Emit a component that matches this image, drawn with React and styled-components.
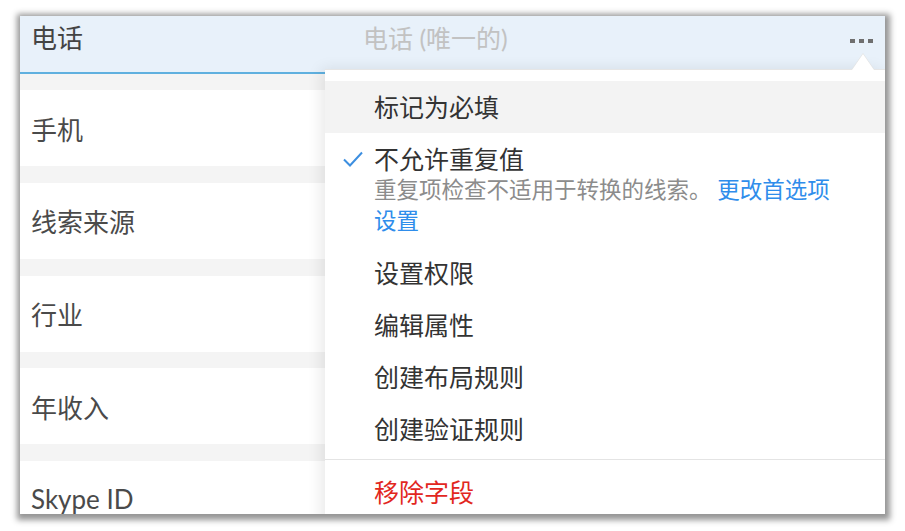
import React from 'react';
import styled, { createGlobalStyle } from 'styled-components';

const GlobalStyle = createGlobalStyle`
  html, body {
    margin: 0;
    padding: 0;
    background: #fff;
  }
  body {
    font-family: Lato, "Noto Sans CJK SC", sans-serif;
  }
`;

const Page = styled.div`
  width: 905px;
  height: 531px;
  padding: 16px 0 0 20px;
  box-sizing: border-box;
`;

const Frame = styled.div`
  position: relative;
  width: 865px;
  height: 498px;
  overflow: hidden;
  background: #f4f4f4;
  box-shadow: 1px 2px 6px 4px rgba(0, 0, 0, 0.42);
`;

const Header = styled.div`
  height: 58px;
  box-sizing: border-box;
  padding: 7px 0 0 11px;
  display: flex;
  align-items: flex-start;
  background: #e8f1fa;
  border-bottom: 2px solid #5fb0df;
`;

const HeaderLabel = styled.div`
  width: 332px;
  font-size: 26px;
  line-height: 30px;
  color: #444;
`;

const Placeholder = styled.div`
  flex: 1;
  font-size: 25px;
  line-height: 30px;
  color: #c2c2c2;
`;

const Dots = styled.div`
  display: flex;
  gap: 4px;
  margin: 16px 12px 0 0;

  span {
    width: 5px;
    height: 4px;
    background: #6f6f6f;
  }
`;

const Rows = styled.div`
  display: flex;
  flex-direction: column;
  gap: 16.8px;
  padding-top: 16px;
`;

const Row = styled.div`
  height: 76px;
  flex-shrink: 0;
  display: flex;
  align-items: center;
  padding-left: 11px;
  background: #fff;
  font-size: 26px;
  color: #4a4a4a;
`;

const Menu = styled.div`
  position: absolute;
  top: 53px;
  left: 305px;
  right: 0;
  padding: 11px 0;
  background: #fff;
  border-top: 1px solid #e6e6e6;
  box-shadow: -4px 0 14px rgba(0, 0, 0, 0.09);
`;

const Caret = styled.div`
  position: absolute;
  top: -16px;
  right: 11px;
  width: 0;
  height: 0;
  border-left: 11px solid transparent;
  border-right: 11px solid transparent;
  border-bottom: 16px solid #fff;
  filter: drop-shadow(0 -1px 0 #e2e2e2);
`;

const Item = styled.div`
  position: relative;
  height: ${p => (p.$tall ? 'auto' : '52px')};
  box-sizing: border-box;
  padding: ${p => (p.$tall ? '11px 44px 11px 49px' : '0 44px 1px 49px')};
  display: ${p => (p.$tall ? 'block' : 'flex')};
  align-items: center;
  background: ${p => (p.$active ? '#f3f3f3' : '#fff')};
  font-size: 25px;
  line-height: 30px;
  color: ${p => (p.$danger ? '#e2271e' : '#333')};
`;

const Check = styled.svg`
  position: absolute;
  left: 18px;
  top: 18px;
`;

const Sub = styled.div`
  font-size: 22.5px;
  line-height: 31px;
  color: #8c8c8c;

  a {
    color: #2f8deb;
    text-decoration: none;
  }
`;

const Divider = styled.div`
  height: 1px;
  margin: 4px 0 6px;
  background: #e4e4e4;
`;

const labels = ['手机', '线索来源', '行业', '年收入', 'Skype ID'];

export default function App() {
  return (
    <Page>
      <GlobalStyle />
      <Frame>
        <Header>
          <HeaderLabel>电话</HeaderLabel>
          <Placeholder>电话 (唯一的)</Placeholder>
          <Dots>
            <span />
            <span />
            <span />
          </Dots>
        </Header>
        <Rows>
          {labels.map(l => (
            <Row key={l}>{l}</Row>
          ))}
        </Rows>
        <Menu>
          <Caret />
          <Item $active>标记为必填</Item>
          <Item $tall>
            <Check width="20" height="16" viewBox="0 0 20 16">
              <path d="M1 8.5 L7 14.5 L19 1.5" fill="none" stroke="#3d8fe0" strokeWidth="2" />
            </Check>
            不允许重复值
            <Sub>
              重复项检查不适用于转换的线索。 <a href="#">更改首选项设置</a>
            </Sub>
          </Item>
          <Item>设置权限</Item>
          <Item>编辑属性</Item>
          <Item>创建布局规则</Item>
          <Item>创建验证规则</Item>
          <Divider />
          <Item $danger>移除字段</Item>
        </Menu>
      </Frame>
    </Page>
  );
}
